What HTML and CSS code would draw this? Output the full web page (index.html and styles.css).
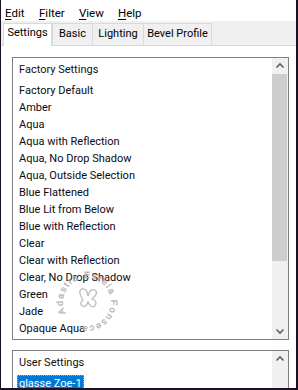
FILE: index.html
```
<!DOCTYPE html>
<html>
<head>
<meta charset="utf-8">
<link rel="stylesheet" href="styles.css">
</head>
<body>
<div class="win">
  <div class="menubar">
    <span class="mi mi-edit"><u>E</u>dit</span>
    <span class="mi mi-filter"><u>F</u>ilter</span>
    <span class="mi mi-view"><u>V</u>iew</span>
    <span class="mi"><u>H</u>elp</span>
  </div>
  <div class="tabs">
    <div class="tab-fill tab-lead"></div>
    <div class="tab tab-sel">Settings</div>
    <div class="tab tab-basic">Basic</div>
    <div class="tab tab-light">Lighting</div>
    <div class="tab tab-bevel">Bevel Profile</div>
    <div class="tab-fill tab-rest"></div>
  </div>
  <div class="page">
    <div class="listbox factory">
      <div class="list">
        <div class="hdr">Factory Settings</div>
        <div class="item">Factory Default</div>
        <div class="item">Amber</div>
        <div class="item">Aqua</div>
        <div class="item">Aqua with Reflection</div>
        <div class="item">Aqua, No Drop Shadow</div>
        <div class="item">Aqua, Outside Selection</div>
        <div class="item">Blue Flattened</div>
        <div class="item">Blue Lit from Below</div>
        <div class="item">Blue with Reflection</div>
        <div class="item">Clear</div>
        <div class="item">Clear with Reflection</div>
        <div class="item">Clear, No Drop Shadow</div>
        <div class="item">Green</div>
        <div class="item">Jade</div>
        <div class="item">Opaque Aqua</div>
      </div>
      <div class="sbar">
        <div class="sbtn"><svg width="16" height="16" viewBox="0 0 16 16"><polyline points="4.5,9.5 8,6 11.5,9.5" fill="none" stroke="#606060" stroke-width="1.6"/></svg></div>
        <div class="thumb"></div>
        <div class="track"></div>
        <div class="sbtn"><svg width="16" height="16" viewBox="0 0 16 16"><polyline points="4.5,6.5 8,10 11.5,6.5" fill="none" stroke="#606060" stroke-width="1.6"/></svg></div>
      </div>
    </div>
    <div class="listbox user">
      <div class="list">
        <div class="hdr">User Settings</div>
        <div class="item item-sel"><span class="selbox">glasse Zoe-1</span></div>
      </div>
      <div class="sbar">
        <div class="sbtn"><svg width="16" height="16" viewBox="0 0 16 16"><polyline points="4.5,9.5 8,6 11.5,9.5" fill="none" stroke="#606060" stroke-width="1.6"/></svg></div>
        <div class="track"></div>
      </div>
    </div>
    <svg class="stamp" width="70" height="70" viewBox="0 0 70 70">
      <defs>
        <path id="ring" d="M 11.5 46 A 24 24 0 1 1 35 59 A 24 24 0 0 1 11.5 46"/>
      </defs>
      <text class="stamp-t"><textPath href="#ring" textLength="128" lengthAdjust="spacing">Adastra Estela Fonseca</textPath></text>
      <path d="M29 33 q-6 -9 -1 -11 q5 -1 6 7 q2 -8 7 -6 q4 3 -3 9 q6 2 3 7 q-4 3 -7 -4 q-2 6 -6 4 q-3 -3 1 -6z" fill="none" stroke="#bdbdbd" stroke-width="1.3"/>
    </svg>
  </div>
</div>
</body>
</html>
```
FILE: styles.css
```
html, body {
  margin: 0;
  padding: 0;
  background: #ffffff;
}
.win {
  width: 298px;
  height: 390px;
  box-sizing: border-box;
  border-left: 1px solid #1d0f24;
  border-right: 2px solid #1d0f24;
  border-bottom: 2px solid #1d0f24;
  background: #ffffff;
  overflow: hidden;
  font-family: Roboto, "Liberation Sans", sans-serif;
  font-size: 11px;
  color: #000;
  display: flex;
  flex-direction: column;
}
.menubar {
  height: 21px;
  flex: none;
  display: flex;
  padding-left: 4px;
  padding-top: 5px;
  box-sizing: border-box;
  line-height: 16px;
  font-size: 11.5px;
  background: #fff;
}
.mi { white-space: nowrap; }
.mi u { text-decoration-thickness: 1px; text-underline-offset: 2px; }
.mi-edit { width: 34px; }
.mi-filter { width: 40px; }
.mi-view { width: 39px; }

.tabs {
  height: 25px;
  flex: none;
  display: flex;
  align-items: flex-end;
  background: #f0f0f0;
}
.tab-fill {
  height: 0;
  border-bottom: 1px solid #d9d9d9;
}
.tab-lead { width: 2px; }
.tab-rest { flex: 1; }
.tab {
  height: 20px;
  box-sizing: content-box;
  border-top: 1px solid #d9d9d9;
  border-left: 1px solid #d9d9d9;
  border-bottom: 1px solid #d9d9d9;
  background: #f0f0f0;
  text-align: center;
  line-height: 18px;
  padding-top: 1px;
  white-space: nowrap;
}
.tab-sel {
  width: 47px;
  height: 22px;
  border-right: 1px solid #d9d9d9;
  border-bottom: none;
  background: #ffffff;
  line-height: 17px;
  padding-top: 0;
}
.tab-basic { width: 39px; }
.tab-light { width: 50px; }
.tab-bevel { width: 67px; border-right: 1px solid #d9d9d9; }

.page {
  flex: 1;
  position: relative;
  background: #fff;
  padding: 11px 0 0 11px;
  display: flex;
  flex-direction: column;
  gap: 10px;
}
.listbox {
  width: 277px;
  box-sizing: border-box;
  border: 1px solid #7f7f7f;
  display: flex;
  flex: none;
}
.factory { height: 283px; }
.user { height: 60px; }
.list {
  flex: 1;
  padding: 3px 0 0 6px;
  line-height: 17px;
  white-space: nowrap;
  overflow: hidden;
}
.hdr { margin-bottom: 4px; color: #111; }
.item { color: #0a0a14; }
.item-sel { margin-left: -2px; }
.selbox {
  display: inline-block;
  background: #0078d7;
  color: #fff;
  padding: 0 2px;
  outline: 1px dotted #7fb8e8;
  outline-offset: -1px;
}
.sbar {
  width: 16px;
  flex: none;
  display: flex;
  flex-direction: column;
  background: #f0f0f0;
}
.sbtn { height: 16px; flex: none; }
.sbtn svg { display: block; }
.thumb {
  height: 187px;
  flex: none;
  background: #cdcdcd;
  margin-right: 1px;
}
.track { flex: 1; }

.stamp {
  position: absolute;
  left: 53px;
  top: 221px;
}
.stamp-t {
  font-family: "Liberation Sans", sans-serif;
  font-size: 9px;
  fill: #c2c2c2;
  stroke: #a9a9a9;
  stroke-width: 0.3px;
}
```
